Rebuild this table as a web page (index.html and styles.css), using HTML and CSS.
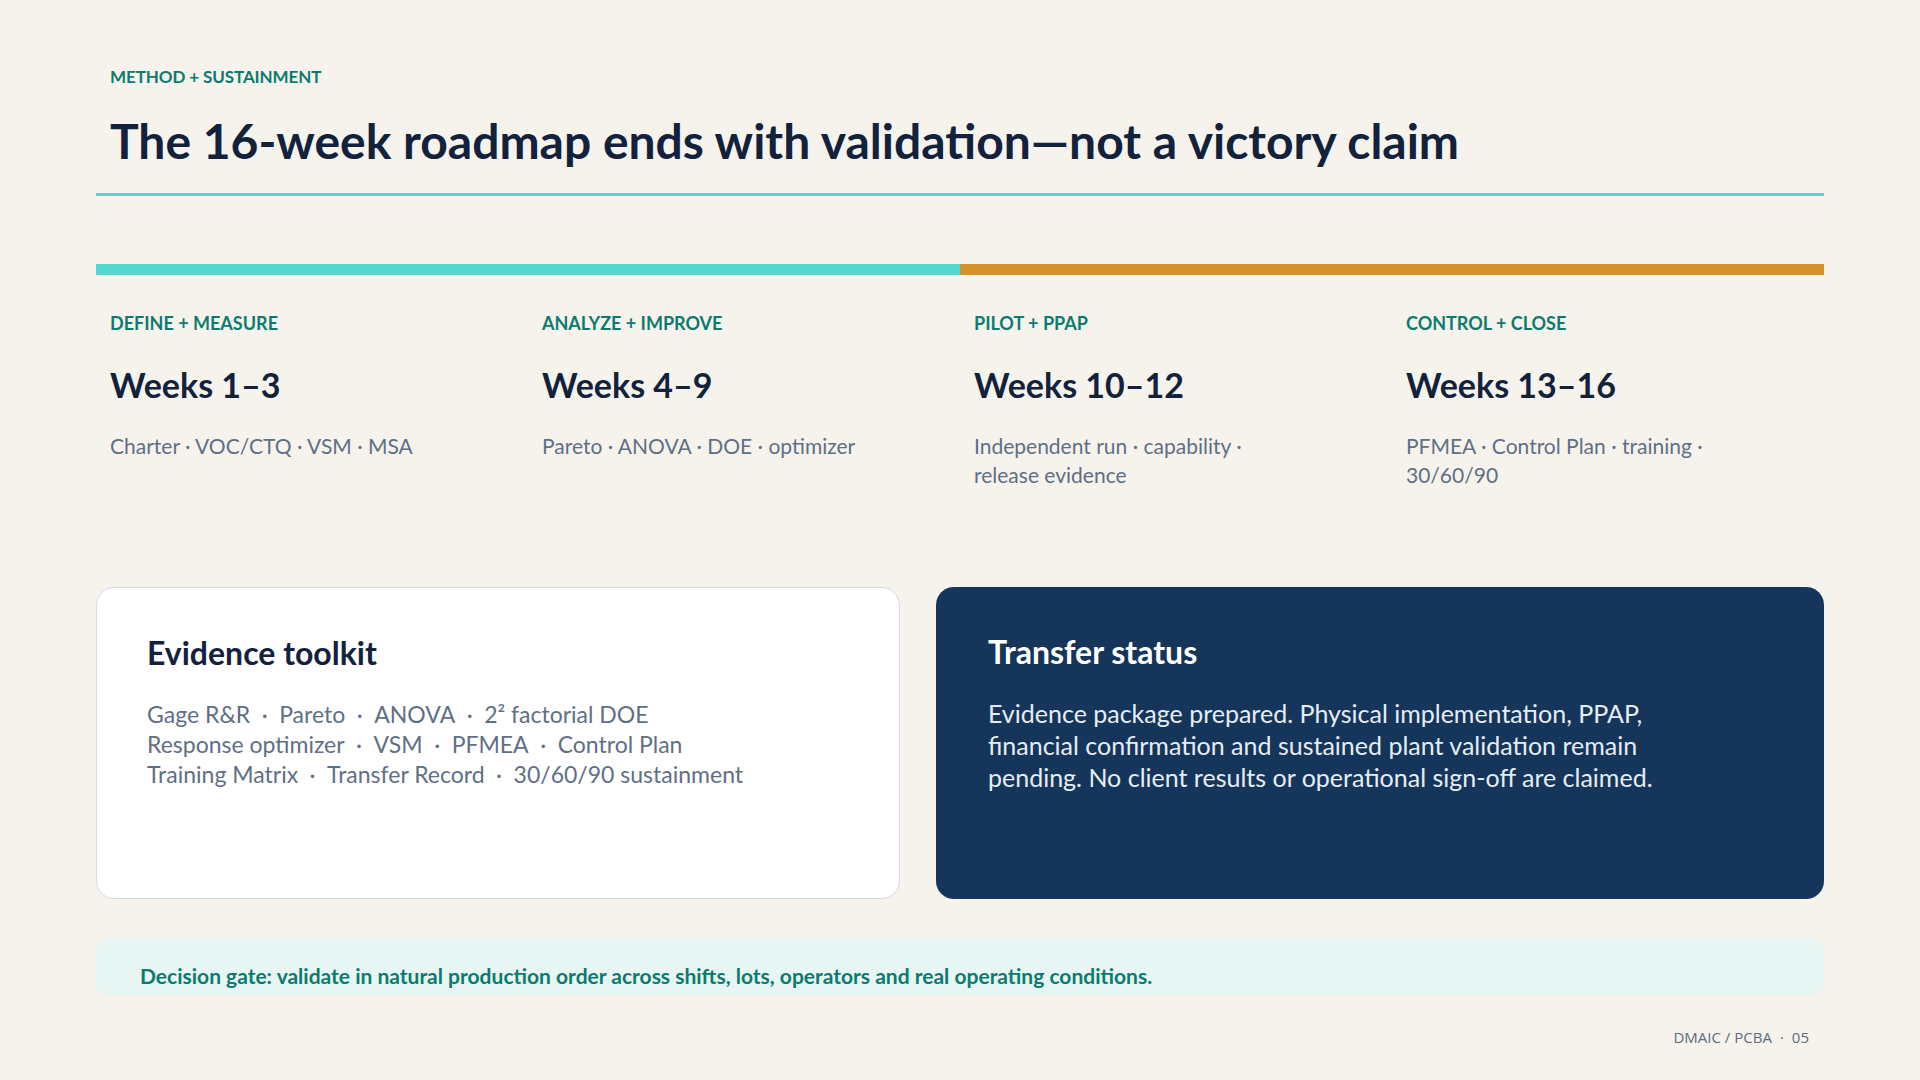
FILE: index.html
```html
<!DOCTYPE html>
<html lang="en">
<head>
<meta charset="utf-8">
<title>16-week roadmap</title>
<link rel="stylesheet" href="styles.css">
</head>
<body>
<div class="slide">
  <header class="head">
    <div class="eyebrow">METHOD + SUSTAINMENT</div>
    <h1 class="title">The 16-week roadmap ends with validation—not a victory claim</h1>
  </header>

  <div class="progress">
    <span class="seg seg-teal"></span>
    <span class="seg seg-gold"></span>
  </div>

  <div class="phases">
    <div class="phase">
      <div class="phase-label">DEFINE + MEASURE</div>
      <div class="phase-weeks">Weeks 1–3</div>
      <div class="phase-desc">Charter · VOC/CTQ · VSM · MSA</div>
    </div>
    <div class="phase">
      <div class="phase-label">ANALYZE + IMPROVE</div>
      <div class="phase-weeks">Weeks 4–9</div>
      <div class="phase-desc">Pareto · ANOVA · DOE · optimizer</div>
    </div>
    <div class="phase">
      <div class="phase-label">PILOT + PPAP</div>
      <div class="phase-weeks">Weeks 10–12</div>
      <div class="phase-desc">Independent run · capability · release evidence</div>
    </div>
    <div class="phase">
      <div class="phase-label">CONTROL + CLOSE</div>
      <div class="phase-weeks">Weeks 13–16</div>
      <div class="phase-desc">PFMEA · Control Plan · training · 30/60/90</div>
    </div>
  </div>

  <div class="cards">
    <section class="card card-light">
      <h2 class="card-title">Evidence toolkit</h2>
      <div class="toolkit">
        <div class="tk-line">Gage R&amp;R<span class="sep">·</span>Pareto<span class="sep">·</span>ANOVA<span class="sep">·</span>2² factorial DOE</div>
        <div class="tk-line">Response optimizer<span class="sep">·</span>VSM<span class="sep">·</span>PFMEA<span class="sep">·</span>Control Plan</div>
        <div class="tk-line">Training Matrix<span class="sep">·</span>Transfer Record<span class="sep">·</span>30/60/90 sustainment</div>
      </div>
    </section>
    <section class="card card-dark">
      <h2 class="card-title">Transfer status</h2>
      <p class="status-text">Evidence package prepared. Physical implementation, PPAP, financial confirmation and sustained plant validation remain pending. No client results or operational sign-off are claimed.</p>
    </section>
  </div>

  <div class="gate">Decision gate: validate in natural production order across shifts, lots, operators and real operating conditions.</div>

  <footer class="foot">DMAIC / PCBA<span class="foot-sep">·</span>05</footer>
</div>
</body>
</html>
```

FILE: styles.css
```css
* { box-sizing: border-box; }

html, body {
  margin: 0;
  padding: 0;
}

body {
  background: #f6f3ec;
  font-family: Lato, "Open Sans", "Noto Sans", sans-serif;
  color: #12223d;
}

.slide {
  width: 1920px;
  height: 1080px;
  padding: 66px 96px 0;
  overflow: hidden;
}

.head {
  padding: 0 14px 24.6px;
  border-bottom: 3px solid #52d7cc;
}

.eyebrow {
  font-size: 17px;
  line-height: 21.6px;
  font-weight: 700;
  letter-spacing: -0.1px;
  color: #0b7b6f;
}

.title {
  margin: 26.8px 0 0;
  font-size: 48px;
  line-height: 54px;
  font-weight: 700;
  color: #12223d;
}

.progress {
  margin-top: 68px;
  height: 11px;
  display: flex;
}

.seg { flex: 1; }
.seg-teal { background: #52d7cc; }
.seg-gold { background: #d4922a; }

.phases {
  margin-top: 38px;
  display: grid;
  grid-template-columns: repeat(4, 1fr);
}

.phase {
  padding: 0 14px;
}

.phase-label {
  font-size: 18px;
  line-height: 21.6px;
  font-weight: 700;
  color: #0b7b6f;
}

.phase-weeks {
  margin-top: 30.8px;
  font-size: 34px;
  line-height: 40.8px;
  font-weight: 700;
  color: #12223d;
}

.phase-desc {
  margin-top: 25.2px;
  max-width: 322px;
  font-size: 21px;
  line-height: 29px;
  color: #5f6f86;
}

.cards {
  margin-top: 98px;
  display: grid;
  grid-template-columns: 804px 1fr;
  gap: 36px;
  height: 312px;
}

.card {
  border-radius: 18px;
  padding: 46px 52px 0;
}

.card-light {
  background: #ffffff;
  border: 1.5px solid #d3dce5;
  padding-left: 50px;
}

.card-dark {
  background: #15365a;
}

.card-title {
  margin: 0;
  font-size: 32px;
  line-height: 38.4px;
  font-weight: 700;
  color: #12223d;
}

.card-dark .card-title {
  color: #ffffff;
}

.toolkit {
  margin-top: 26.3px;
  font-size: 23px;
  line-height: 30px;
  color: #5f6f86;
}

.sep {
  display: inline-block;
  margin: 0 11.5px;
}

.status-text {
  margin: 25.5px 0 0;
  max-width: 705px;
  font-size: 25px;
  line-height: 32px;
  color: #e6edf4;
}

.gate {
  margin-top: 39px;
  height: 57px;
  padding: 26px 44px 0;
  border-radius: 12px;
  background: #e7f6f3;
  font-size: 21px;
  line-height: 24px;
  font-weight: 700;
  color: #0b7b6f;
  overflow: hidden;
}

.foot {
  margin-top: 32px;
  padding-right: 15px;
  display: flex;
  justify-content: flex-end;
  font-family: "Open Sans", "Noto Sans", sans-serif;
  font-size: 15px;
  line-height: 20px;
  color: #5d6b82;
}

.foot-sep {
  margin: 0 8px;
}
```
